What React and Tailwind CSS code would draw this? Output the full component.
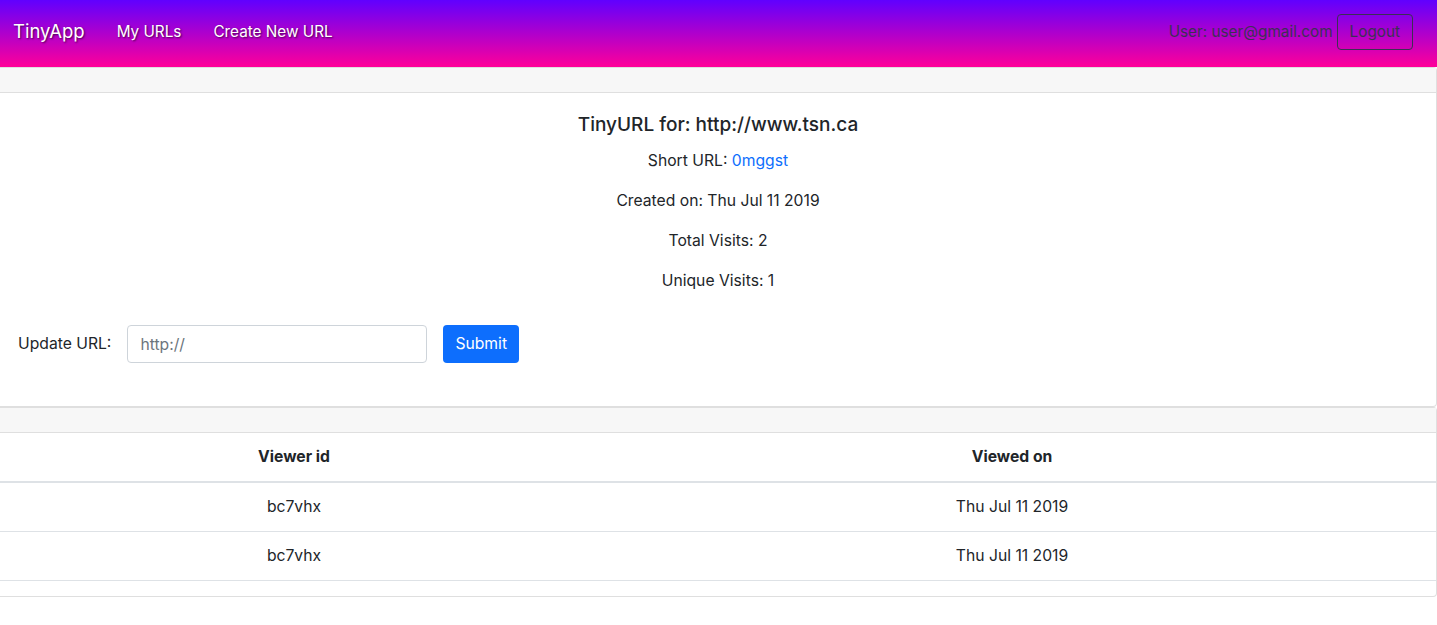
const views = [
  { id: 'bc7vhx', date: 'Thu Jul 11 2019' },
  { id: 'bc7vhx', date: 'Thu Jul 11 2019' },
];

const NavBar = () => (
  <nav className="h-[67px] flex items-center justify-between bg-[linear-gradient(to_bottom,#6000ff,#ff0099)] pl-[13px] pr-6 pb-[3px]">
    <div className="flex items-center">
      <a className="text-[18.5px] text-white [text-shadow:1px_1px_2px_rgba(0,0,0,0.6)] mr-8">TinyApp</a>
      <a className="text-[15.3px] text-white [text-shadow:1px_1px_2px_rgba(0,0,0,0.6)] mr-8">My URLs</a>
      <a className="text-[15.3px] text-white [text-shadow:1px_1px_2px_rgba(0,0,0,0.6)]">Create New URL</a>
    </div>
    <div className="flex items-center">
      <span className="text-[15.3px] text-[#3b3054]">User: user@gmail.com</span>
      <button className="ml-1 h-9 px-3 border border-[#3b3054] rounded-[4px] text-[15.3px] text-[#3b3054]">
        Logout
      </button>
    </div>
  </nav>
);

const Card = ({ children }) => (
  <div className="border-y border-r border-[#dfdfdf] rounded-r-[4px] bg-white">
    <div className="h-[25px] bg-[#f7f7f7] border-b border-[#dfdfdf]" />
    {children}
  </div>
);

export default function App() {
  return (
    <div className="min-h-screen bg-white text-[#212529] font-['Inter',sans-serif] text-[15.7px]">
      <NavBar />
      <Card>
        <div className="pt-[20px] pb-[43px] px-[18px]">
          <h5 className="text-center text-[19px] font-medium leading-6 mb-[12px]">TinyURL for: http://www.tsn.ca</h5>
          <p className="text-center leading-6 mb-4">
            Short URL: <a className="text-[#0d6efd]">0mggst</a>
          </p>
          <p className="text-center leading-6 mb-4">Created on: Thu Jul 11 2019</p>
          <p className="text-center leading-6 mb-4">Total Visits: 2</p>
          <p className="text-center leading-6 mb-8">Unique Visits: 1</p>
          <form className="flex items-center" onSubmit={(e) => e.preventDefault()}>
            <label className="mr-4">Update URL:</label>
            <input
              type="text"
              placeholder="http://"
              className="w-[300px] h-[38px] px-3 border border-[#ced4da] rounded-[4px] placeholder:text-[#6c757d] outline-none"
            />
            <button type="submit" className="ml-4 h-[38px] px-3 bg-[#0d6efd] text-white rounded-[4px]">
              Submit
            </button>
          </form>
        </div>
      </Card>
      <Card>
        <table className="w-full mb-[15px] border-collapse">
          <thead>
            <tr className="border-b-2 border-[#dee2e6]">
              <th className="w-[588px] h-[49px] text-center font-bold">Viewer id</th>
              <th className="h-[49px] text-center font-bold">Viewed on</th>
            </tr>
          </thead>
          <tbody>
            {views.map((v, i) => (
              <tr key={i} className="border-b border-[#dee2e6]">
                <td className="h-[49px] text-center">{v.id}</td>
                <td className="h-[49px] text-center">{v.date}</td>
              </tr>
            ))}
          </tbody>
        </table>
      </Card>
    </div>
  );
}
